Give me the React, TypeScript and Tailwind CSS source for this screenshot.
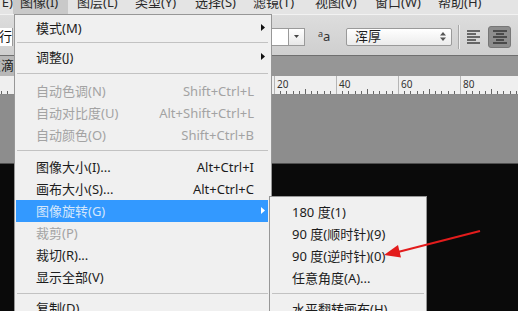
import React from "react";

const Arrow = ({ color = "#111" }: { color?: string }) => (
  <svg width="4" height="7" viewBox="0 0 4 7">
    <path d="M0 0 L4 3.5 L0 7 Z" fill={color} />
  </svg>
);

type RowProps = { label: string; sc?: string; dis?: boolean; sub?: boolean; hi?: boolean };

function Row({ label, sc, dis, sub, hi }: RowProps) {
  const color = hi ? "bg-[#3399ff] text-[#d3e6fb]" : dis ? "text-[#a3a3a3]" : "text-[#1c1c1c]";
  return (
    <div className={"relative h-[22px] flex items-center pl-[20px] pr-[14px] text-[13px] leading-[22px] whitespace-nowrap " + color}>
      <span>{label}</span>
      {sc && <span className="ml-auto">{sc}</span>}
      {sub && (
        <span className="absolute right-[3px] top-[7px] flex">
          <Arrow color={hi ? "#ffffff" : "#111111"} />
        </span>
      )}
    </div>
  );
}

function SubRow({ label }: { label: string }) {
  return (
    <div className="h-[22px] flex items-center pl-[22px] text-[13px] leading-[22px] text-[#1c1c1c] whitespace-nowrap">
      {label}
    </div>
  );
}

function Ruler() {
  const ticks: React.ReactNode[] = [];
  for (let k = -4; k <= 5; k++) {
    const x0 = 212 + 62 * k;
    ticks.push(<line key={"m" + k} x1={x0 + 0.5} y1={0} x2={x0 + 0.5} y2={18} stroke="#b5b5b5" strokeWidth={1} />);
    if (x0 > 260) {
      ticks.push(
        <text key={"t" + k} x={x0 + 3} y={12} fontSize={10} fill="#333" fontFamily="Noto Sans, sans-serif">
          {20 * k}
        </text>
      );
    }
    for (let j = 1; j < 10; j++) {
      const x = Math.round(x0 + 6.2 * j) + 0.5;
      const h = j === 5 ? 5 : 3;
      ticks.push(<line key={"s" + k + "_" + j} x1={x} y1={18 - h} x2={x} y2={18} stroke="#666" strokeWidth={1} />);
    }
  }
  return (
    <svg width="518" height="18" viewBox="0 0 518 18" className="block">
      <rect x="0" y="0" width="518" height="18" fill="#efefef" />
      {ticks}
    </svg>
  );
}

export default function App() {
  return (
    <div className="relative w-[518px] h-[311px] overflow-hidden font-['Noto_Sans','Noto_Sans_CJK_SC',sans-serif] bg-[#8d8d8d]">
      <div className="flex flex-col w-[518px]">
        {/* menu bar */}
        <div className="h-[14px] shrink-0 bg-[#e4e4e4] flex text-[13px] leading-[13px] text-[#2a2a2a] overflow-hidden whitespace-nowrap">
          <div className="w-[13px] overflow-hidden flex justify-end -mt-[4px]">
            <span>E)</span>
          </div>
          <div className="w-[55px] bg-[#c9c9c9] pl-[7px]">
            <span className="block -mt-[4px]">图像(I)</span>
          </div>
          <div className="w-[58px] ml-[9px] -mt-[4px]">图层(L)</div>
          <div className="w-[60px] -mt-[4px]">类型(Y)</div>
          <div className="w-[58px] -mt-[4px]">选择(S)</div>
          <div className="w-[62px] -mt-[4px]">滤镜(T)</div>
          <div className="w-[60px] -mt-[4px]">视图(V)</div>
          <div className="w-[63px] -mt-[4px]">窗口(W)</div>
          <div className="-mt-[4px]">帮助(H)</div>
        </div>

        {/* options bar */}
        <div className="h-[41px] shrink-0 bg-gradient-to-b from-[#dddddd] to-[#cfcfcf] border-t border-[#f2f2f2] flex items-center pt-[3px]">
          <div className="w-[13px] h-[18px] bg-white border-r border-[#9a9a9a] overflow-hidden flex justify-end items-center text-[13px] text-[#111]">
            <span>行</span>
          </div>
          <div className="ml-[242px] w-[34px] h-[18px] bg-white border border-[#9a9a9a]" />
          <div className="w-[16px] h-[18px] bg-gradient-to-b from-white to-[#e8e8e8] border border-l-0 border-[#9a9a9a] flex items-center justify-center">
            <svg width="5" height="3" viewBox="0 0 5 3"><path d="M0 0 L5 0 L2.5 3 Z" fill="#444" /></svg>
          </div>
          <div className="ml-[13px] w-[16px] flex items-end text-[#333] leading-none">
            <span className="text-[9px] -translate-y-[5px]">a</span>
            <span className="text-[13px]">a</span>
          </div>
          <div className="ml-[12px] w-[106px] h-[18px] rounded-[2px] bg-gradient-to-b from-white to-[#ececec] border border-[#9a9a9a] flex items-center pl-[8px] pr-[5px] text-[13px] text-[#1c1c1c]">
            <span>浑厚</span>
            <svg className="ml-auto" width="6" height="9" viewBox="0 0 6 9">
              <path d="M0 3.5 L3 0 L6 3.5 Z" fill="#555" />
              <path d="M0 5.5 L3 9 L6 5.5 Z" fill="#555" />
            </svg>
          </div>
          <div className="ml-[6px] w-[2px] h-[24px] flex">
            <div className="w-px h-full bg-[#a8a8a8]" />
            <div className="w-px h-full bg-[#eeeeee]" />
          </div>
          <div className="ml-[7px] w-[14px] h-[20px] flex items-center">
            <svg width="14" height="16" viewBox="0 0 14 16">
              <rect x="0" y="1" width="13" height="2" fill="#666" />
              <rect x="0" y="4" width="9" height="2" fill="#666" />
              <rect x="0" y="7" width="13" height="2" fill="#666" />
              <rect x="0" y="10" width="9" height="2" fill="#666" />
              <rect x="0" y="13" width="13" height="2" fill="#666" />
            </svg>
          </div>
          <div className="ml-[7px] w-[23px] h-[22px] rounded-[3px] bg-[#8d8d8d] border border-[#777] flex items-center justify-center">
            <svg width="14" height="16" viewBox="0 0 14 16">
              <rect x="0" y="1" width="14" height="2" fill="#4a4a4a" />
              <rect x="3" y="4" width="8" height="2" fill="#4a4a4a" />
              <rect x="0" y="7" width="14" height="2" fill="#4a4a4a" />
              <rect x="3" y="10" width="8" height="2" fill="#4a4a4a" />
              <rect x="0" y="13" width="14" height="2" fill="#4a4a4a" />
            </svg>
          </div>
        </div>

        {/* document tab strip */}
        <div className="h-[21px] shrink-0 bg-[#969696] border-t border-[#6f6f6f] flex">
          <div className="w-[120px] bg-[#b8b8b8] flex justify-start overflow-hidden">
            <div className="w-[14px] overflow-hidden flex justify-end items-center text-[13px] text-[#1a1a1a] whitespace-nowrap">
              <span>点滴</span>
            </div>
          </div>
        </div>

        {/* ruler */}
        <div className="h-[19px] shrink-0 border-b border-[#8a8a8a]">
          <Ruler />
        </div>

        {/* gray pasteboard */}
        <div className="h-[69px] shrink-0 bg-[#8d8d8d] border-b border-[#505050]" />

        {/* black canvas */}
        <div className="h-[148px] shrink-0 bg-[#0a0a0a]" />
      </div>

      {/* main dropdown menu */}
      <div className="absolute left-[14px] top-[14px] w-[258px] h-[310px] bg-[#f0f0f0] border border-[#979797] pt-[2px] pl-[1px] pr-[3px]">
        <Row label="模式(M)" sub />
        <div className="h-[7px] pt-[3px] pl-[1px]"><div className="h-px bg-[#c2c2c2]" /></div>
        <Row label="调整(J)" sub />
        <div className="h-[12px] pt-[5px] pl-[1px]"><div className="h-px bg-[#c2c2c2]" /></div>
        <Row label="自动色调(N)" sc="Shift+Ctrl+L" dis />
        <Row label="自动对比度(U)" sc="Alt+Shift+Ctrl+L" dis />
        <Row label="自动颜色(O)" sc="Shift+Ctrl+B" dis />
        <div className="h-[10px] pt-[4px] pl-[1px]"><div className="h-px bg-[#c2c2c2]" /></div>
        <Row label="图像大小(I)..." sc="Alt+Ctrl+I" />
        <Row label="画布大小(S)..." sc="Alt+Ctrl+C" />
        <Row label="图像旋转(G)" sub hi />
        <Row label="裁剪(P)" dis />
        <Row label="裁切(R)..." />
        <Row label="显示全部(V)" />
        <div className="h-[9px] pt-[5px] pl-[1px]"><div className="h-px bg-[#c2c2c2]" /></div>
        <Row label="复制(D)..." />
      </div>

      {/* submenu */}
      <div className="absolute left-[269px] top-[196px] w-[158px] h-[130px] bg-[#f0f0f0] border border-[#979797] pt-[4px]">
        <SubRow label="180 度(1)" />
        <SubRow label="90 度(顺时针)(9)" />
        <SubRow label="90 度(逆时针)(0)" />
        <SubRow label="任意角度(A)..." />
        <div className="h-[9px] pt-[4px] px-[2px]"><div className="h-px bg-[#c2c2c2]" /></div>
        <SubRow label="水平翻转画布(H)" />
      </div>

      {/* red annotation arrow */}
      <svg className="absolute left-0 top-0 pointer-events-none" width="518" height="311" viewBox="0 0 518 311">
        <line x1="480" y1="231" x2="396" y2="252.5" stroke="#e31c1c" strokeWidth="2" />
        <polygon points="384,255 398,245 401,257.5" fill="#e31c1c" />
      </svg>
    </div>
  );
}
